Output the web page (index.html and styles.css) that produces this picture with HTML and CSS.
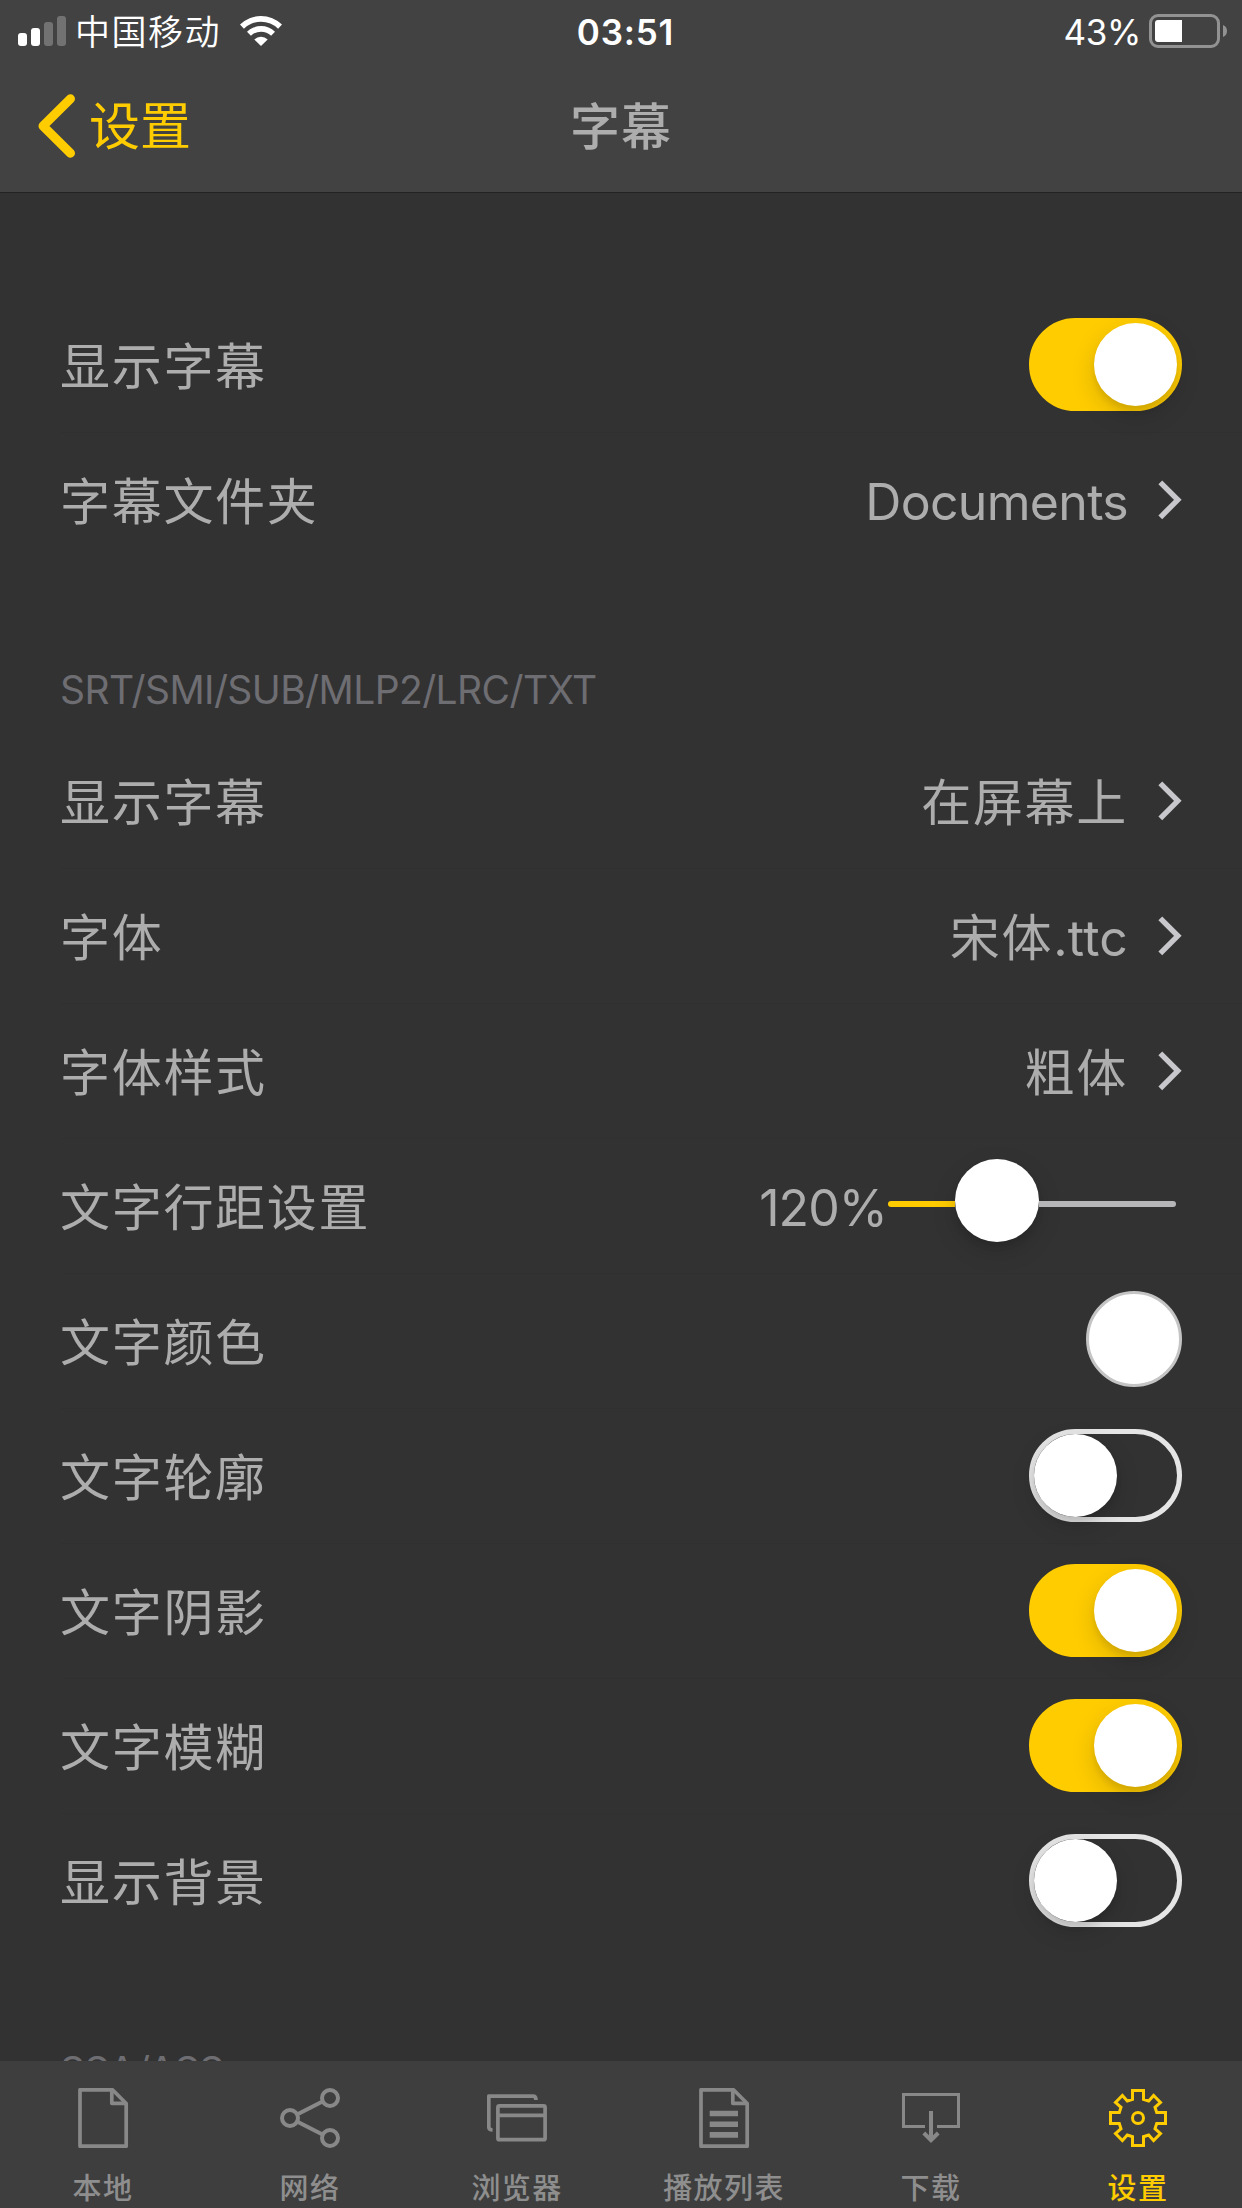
FILE: index.html
```html
<!DOCTYPE html>
<html lang="zh-CN">
  <head>
    <meta charset="UTF-8" />
    <meta name="viewport" content="width=device-width, initial-scale=1.0" />
    <title>字幕</title>
    <link rel="stylesheet" href="styles.css">
  </head>

  <body>
    <div class="phone">
      <header class="header">
        <div class="status">
          <div class="status-left">
            <div class="signal">
              <i class="bar1"></i><i class="bar2"></i><i class="bar3 off"></i><i class="bar4 off"></i>
            </div>
            <span class="carrier">中国移动</span>
            <svg class="wifi" width="42" height="30" viewBox="0 0 42 30" fill="#fff">
              <path d="M0 8.6a30 30 0 0 1 42 0l-3.9 4.2a24.3 24.3 0 0 0-34.2 0z" />
              <path d="M7 15.8a20 20 0 0 1 28 0l-3.9 4a14.5 14.5 0 0 0-20.2 0z" />
              <path d="M14.3 23.4a10 10 0 0 1 13.4 0L21 30z" />
            </svg>
          </div>
          <span class="time">03:51</span>
          <div class="status-right">
            <span class="percent">43%</span>
            <div class="battery"><i></i></div>
            <svg class="nub" width="4" height="12" viewBox="0 0 4 12"><path d="M0 0a6.5 6.5 0 0 1 0 12z" fill="#929292" /></svg>
          </div>
        </div>
        <div class="nav">
          <a class="back">
            <svg width="38" height="64" viewBox="0 0 38 64" fill="none" stroke="#ffcc00" stroke-width="9" stroke-linecap="round" stroke-linejoin="round"><path d="M32.5 4.8L5 32l27.5 27.2" /></svg>
            <span>设置</span>
          </a>
          <h1>字幕</h1>
        </div>
      </header>

      <main class="content">
        <ul class="group first">
          <li><span class="label">显示字幕</span><b class="switch on"></b></li>
          <li>
            <span class="label">字幕文件夹</span><span class="value en">Documents</span>
            <svg class="arrow" viewBox="0 0 24 40"><path d="M2.3 2.3L19.8 19.8L2.3 37.3" /></svg>
          </li>
        </ul>
        <h2>SRT/SMI/SUB/MLP2/LRC/TXT</h2>
        <ul class="group">
          <li>
            <span class="label">显示字幕</span><span class="value">在屏幕上</span>
            <svg class="arrow" viewBox="0 0 24 40"><path d="M2.3 2.3L19.8 19.8L2.3 37.3" /></svg>
          </li>
          <li>
            <span class="label">字体</span><span class="value">宋体<span class="ext">.ttc</span></span>
            <svg class="arrow" viewBox="0 0 24 40"><path d="M2.3 2.3L19.8 19.8L2.3 37.3" /></svg>
          </li>
          <li>
            <span class="label">字体样式</span><span class="value">粗体</span>
            <svg class="arrow" viewBox="0 0 24 40"><path d="M2.3 2.3L19.8 19.8L2.3 37.3" /></svg>
          </li>
          <li>
            <span class="label">文字行距设置</span><span class="num">120%</span>
            <div class="slider"><i class="fill"></i><i class="thumb"></i><i class="rest"></i></div>
          </li>
          <li><span class="label">文字颜色</span><b class="color"></b></li>
          <li><span class="label">文字轮廓</span><b class="switch"></b></li>
          <li><span class="label">文字阴影</span><b class="switch on"></b></li>
          <li><span class="label">文字模糊</span><b class="switch on"></b></li>
          <li><span class="label">显示背景</span><b class="switch"></b></li>
        </ul>
        <h2 class="last">SSA/ASS</h2>
      </main>

      <footer class="tabs">
        <a>
          <svg viewBox="0 0 61 60"><path d="M7 1.8H39.5L53.2 15.5V58.2H7Z" /><path d="M38.8 2V15.3H53" /></svg>
          <span>本地</span>
        </a>
        <a>
          <svg viewBox="0 0 61 60" class="bold"><circle cx="50" cy="10" r="8" /><circle cx="10" cy="30" r="8" /><circle cx="50" cy="50" r="8" /><path d="M17.5 26.2L42.5 13.5M17.5 33.8L42.5 46.5" /></svg>
          <span>网络</span>
        </a>
        <a>
          <svg viewBox="0 0 61 60"><path d="M5.6 42Q1.8 42 1.8 39V8.2H46Q49 8.2 49 12" /><rect x="10.9" y="17.9" width="47.2" height="33.8" rx="1.5" /><path d="M11 27.3H58" /></svg>
          <span>浏览器</span>
        </a>
        <a>
          <svg viewBox="0 0 61 60"><path d="M7 1.8H39.5L53.2 15.5V58.2H7Z" /><path d="M38.8 2V15.3H53" /><path class="lines" d="M15.7 25.5H44M15.7 36.2H44M15.7 46.9H44" /></svg>
          <span>播放列表</span>
        </a>
        <a>
          <svg viewBox="0 0 61 60" class="thin"><path d="M24 38.5H2.5V6.5H57.5V38.5H36" /><path class="shaft" d="M30 23V52M22.8 45L30 52.2L37.2 45" /></svg>
          <span>下载</span>
        </a>
        <a class="active">
          <svg viewBox="0 0 61 60" class="thin">
            <path d="M24.5 2.5H35.5V11.3L40.7 13L45.6 7.5L52.5 14.4L47 19.3L48.7 24.5H57.5V35.5H48.7L47 40.7L52.5 45.6L45.6 52.5L40.7 47L35.5 48.7V57.5H24.5V48.7L19.3 47L14.4 52.5L7.5 45.6L13 40.7L11.3 35.5H2.5V24.5H11.3L13 19.3L7.5 14.4L14.4 7.5L19.3 13L24.5 11.3Z" />
            <circle cx="30" cy="30" r="5.5" />
          </svg>
          <span>设置</span>
        </a>
      </footer>
    </div>
  </body>
</html>
```
FILE: styles.css
```css
* {
  margin: 0;
  padding: 0;
  list-style: none;
  box-sizing: border-box;
}

body {
  background: #323232;
  font-family: Inter, "Noto Sans CJK SC", sans-serif;
  color: #adadad;
}

svg {
  display: block;
  flex: none;
}

.phone {
  width: 1242px;
  height: 2208px;
  display: flex;
  flex-direction: column;
  overflow: hidden;
}

/* header */
.header {
  flex: none;
  height: 193px;
  background: #424242;
  border-bottom: 1px solid #222;
}

.status {
  height: 60px;
  display: grid;
  grid-template-columns: 1fr auto 1fr;
  align-items: center;
  padding: 0 15px 0 18px;
  color: #fff;
  font-size: 35px;
  line-height: 60px;
}

.status-left,
.status-right {
  display: flex;
  align-items: center;
}

.status-right {
  justify-content: flex-end;
}

.signal {
  display: flex;
  align-items: flex-end;
  gap: 4px;
  height: 30px;
}

.signal i {
  width: 9px;
  border-radius: 3px;
  background: #fff;
}

.signal .off {
  background: #727272;
}

.bar1 {
  height: 13px;
}

.bar2 {
  height: 18px;
}

.bar3 {
  height: 24px;
}

.bar4 {
  height: 30px;
}

.carrier {
  margin-left: 9px;
  padding-top: 2px;
  letter-spacing: 1.5px;
  font-weight: 350;
}

.wifi {
  margin-left: 19px;
}

.time {
  font-weight: 600;
  letter-spacing: 0.8px;
  padding: 2px 0 0 6px;
}

.percent {
  letter-spacing: -0.4px;
  padding-top: 2px;
}

.battery {
  width: 71px;
  height: 34px;
  margin-left: 8px;
  padding: 3px;
  border: 3px solid #929292;
  border-radius: 9px;
}

.battery i {
  display: block;
  width: 27px;
  height: 22px;
  border-radius: 3px 0 0 3px;
  background: #fff;
}

.nub {
  margin-left: 3px;
}

.nav {
  height: 132px;
  display: grid;
  grid-template-columns: 1fr auto 1fr;
  align-items: center;
  padding: 0 38px;
}

.back {
  display: flex;
  align-items: center;
  gap: 13px;
  color: #ffcc00;
  font-size: 51px;
  line-height: 70px;
}

.back span {
  padding-top: 2px;
}

h1 {
  font-size: 50px;
  font-weight: 500;
  letter-spacing: 1px;
  line-height: 70px;
  padding-top: 1px;
}

/* settings list */
.content {
  flex: 1;
  min-height: 0;
  overflow: hidden;
}

.first {
  padding-top: 104px;
}

.group li {
  height: 135px;
  display: flex;
  align-items: center;
  padding: 0 60px;
}

.group li + li {
  background: linear-gradient(#303030, #303030) 61px 0 / 100% 1px no-repeat;
}

.label,
.value,
.num {
  font-size: 50px;
  line-height: 70px;
  letter-spacing: 1.7px;
  padding-top: 5px;
}

.label {
  flex: 1;
}

.ext {
  letter-spacing: 0.2px;
}

.value.en {
  letter-spacing: -0.7px;
}

.num {
  letter-spacing: -0.9px;
  margin-right: 1px;
}

.arrow {
  width: 24px;
  height: 40px;
  margin-left: 30px;
  fill: none;
  stroke: #c7c7cc;
  stroke-width: 5.4;
}

h2 {
  height: 166px;
  padding: 99px 60px 0;
  font-size: 39px;
  font-weight: 400;
  letter-spacing: -0.6px;
  line-height: 48px;
  color: #6d6d72;
}

.switch {
  width: 153px;
  height: 93px;
  border: 5px solid #e5e5e5;
  border-radius: 47px;
}

.switch::after {
  content: "";
  display: block;
  width: 83px;
  height: 83px;
  border-radius: 50%;
  background: #fff;
  box-shadow: 0 9px 24px rgba(0, 0, 0, 0.15), 0 5px 6px rgba(0, 0, 0, 0.08);
}

.on {
  background: #ffcc00;
  border-color: #ffcc00;
}

.on::after {
  margin-left: 60px;
}

.slider {
  width: 288px;
  height: 83px;
  margin-right: 6px;
  margin-bottom: 10px;
  display: flex;
  align-items: center;
}

.slider .fill {
  width: 67px;
  height: 6px;
  margin-top: 7px;
  border-radius: 3px 0 0 3px;
  background: #ffcc00;
}

.slider .thumb {
  width: 84px;
  height: 83px;
  border-radius: 50%;
  background: #fff;
  box-shadow: 0 9px 24px rgba(0, 0, 0, 0.15), 0 5px 6px rgba(0, 0, 0, 0.08);
}

.slider .rest {
  flex: 1;
  height: 6px;
  margin-top: 7px;
  border-radius: 0 3px 3px 0;
  background: #b6b6b8;
}

.color {
  width: 96px;
  height: 96px;
  margin-bottom: 3px;
  border: 3px solid #c4c4c4;
  border-radius: 50%;
  background: #fff;
}

/* bottom tabs */
.tabs {
  flex: none;
  height: 147px;
  display: grid;
  grid-template-columns: repeat(6, 1fr);
  background: #3e3e3e;
  color: #8e8e8e;
}

.tabs a {
  display: flex;
  flex-direction: column;
  align-items: center;
  padding-top: 27px;
  font-size: 29px;
  font-weight: 500;
  line-height: 40px;
  letter-spacing: 1.4px;
}

.tabs span {
  margin-right: 1px;
}

.tabs svg {
  width: 61px;
  height: 60px;
  margin-bottom: 21px;
  fill: none;
  stroke: #888;
  stroke-width: 3.7;
  stroke-linejoin: round;
}

.tabs .bold {
  stroke-width: 4;
}

.tabs .thin {
  stroke-width: 3;
  stroke-linejoin: miter;
}

.tabs .lines {
  stroke-width: 5.6;
}

.tabs .shaft {
  stroke-width: 4;
}

.tabs .active {
  color: #ffcc00;
}

.tabs .active svg {
  stroke: #ffcc00;
}
```
